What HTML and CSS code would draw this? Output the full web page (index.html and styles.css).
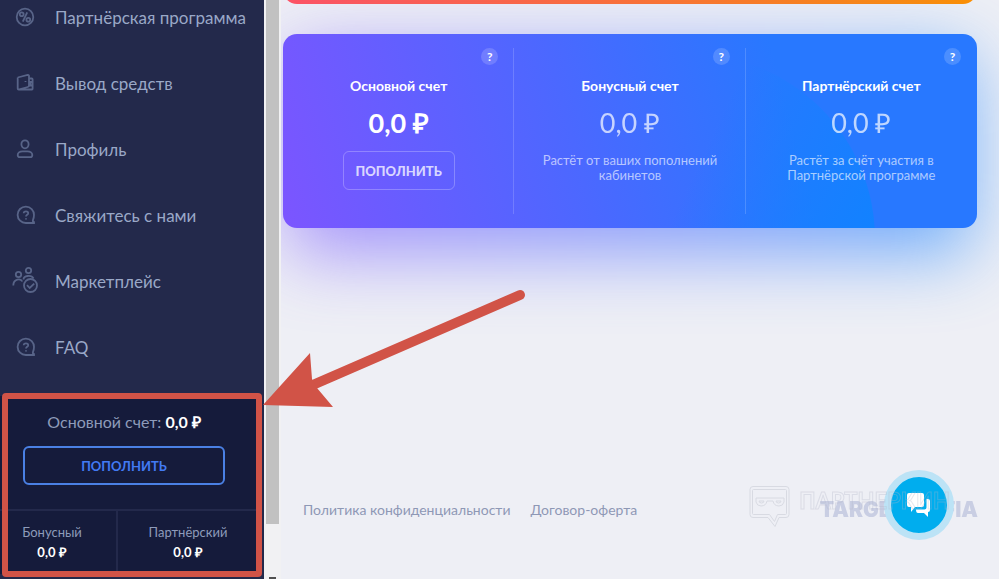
FILE: index.html
```
<!DOCTYPE html>
<html lang="ru">
<head>
  <meta charset="UTF-8">
  <meta name="viewport" content="width=device-width, initial-scale=1.0">
  <title>Баланс</title>
  <link rel="stylesheet" href="styles.css">
</head>
<body>
  <div class="layout">
    <aside class="sidebar">
      <nav class="menu">
        <a href="#" class="menu-item">
          <svg class="icon" viewBox="0 0 26 26"><circle cx="13" cy="13" r="8.3"/><circle cx="9.700" cy="10.3" r="1.9"/><circle cx="16.300" cy="15.7" r="1.9"/><path d="M15.2 8.300l-4.400 9.400"/></svg>
          Партнёрская программа
        </a>
        <a href="#" class="menu-item">
          <svg class="icon" viewBox="0 0 26 26"><path d="M5.7 7.5l10-2.5q1.3-.2 1.3 1v9.5q0 1.2-1.2 1.5L6.5 19.5M5.7 7.5v11q0 1 1 1h13.3q.6 0 .6-.8V9.500q0-1-.9-1h-2.500M20 12h-1.500v3.500h1.500M13.500 11v1"/></svg>
          Вывод средств
        </a>
        <a href="#" class="menu-item">
          <svg class="icon" viewBox="0 0 26 26"><ellipse cx="13" cy="8.3" rx="3.6" ry="4"/><path d="M10.500 15.300h5c3 0 4.800 1.800 4.800 3.700 0 1.400-.8 2.200-2 2.200H7.700c-1.200 0-2-.8-2-2.200 0-1.900 1.800-3.700 4.800-3.700z"/></svg>
          Профиль
        </a>
        <a href="#" class="menu-item">
          <svg class="icon" viewBox="0 0 26 26"><path d="M22 21h-8a8.200 8.200 0 1 1 8-8q0 2.500-1 4.800c-.4 1.200 0 2 1 2.400z"/><path d="M11.700 11.200c0-2.600 4.500-2.500 4.500 0 0 1.700-2.200 1.600-2.200 3.400M14 16.200v1.400"/></svg>
          Свяжитесь с нами
        </a>
        <a href="#" class="menu-item">
          <svg class="icon" viewBox="0 0 26 26"><circle cx="16.500" cy="2.500" r="2.700"/><circle cx="6.500" cy="6.500" r="2.700"/><path d="M1.300 17.500c0-7 7.500-7.500 9-4M11.500 11.500c0-4 8-5 10-1"/><circle cx="18.500" cy="17.500" r="6.500"/><path d="M15 17.200l2.700 2.800 4.500-4.300"/></svg>
          Маркетплейс
        </a>
        <a href="#" class="menu-item">
          <svg class="icon" viewBox="0 0 26 26"><path d="M22 21h-8a8.200 8.200 0 1 1 8-8q0 2.500-1 4.800c-.4 1.200 0 2 1 2.400z"/><path d="M11.700 11.200c0-2.600 4.500-2.500 4.500 0 0 1.700-2.200 1.600-2.200 3.400M14 16.200v1.400"/></svg>
          FAQ
        </a>
      </nav>
      <section class="balance">
        <div class="balance-main">
          <p class="balance-title">Основной счет: <b>0,0 ₽</b></p>
          <button type="button" class="balance-btn">ПОПОЛНИТЬ</button>
        </div>
        <div class="balance-row">
          <div class="balance-cell">Бонусный<b>0,0 ₽</b></div>
          <div class="balance-cell">Партнёрский<b>0,0 ₽</b></div>
        </div>
      </section>
    </aside>
    <div class="scrollbar">
      <div class="thumb"></div>
      <div class="scroll-arrow"></div>
    </div>
    <main class="content">
      <div class="banner"></div>
      <section class="accounts">
        <div class="accounts-bg"></div>
        <div class="account">
          <button type="button" class="help">?</button>
          <h3>Основной счет</h3>
          <p class="sum sum-main">0,0 ₽</p>
          <button type="button" class="account-btn">ПОПОЛНИТЬ</button>
        </div>
        <div class="account">
          <button type="button" class="help">?</button>
          <h3>Бонусный счет</h3>
          <p class="sum">0,0 ₽</p>
          <p class="note">Растёт от ваших пополнений<br>кабинетов</p>
        </div>
        <div class="account">
          <button type="button" class="help">?</button>
          <h3>Партнёрский счет</h3>
          <p class="sum">0,0 ₽</p>
          <p class="note">Растёт за счёт участия в<br>Партнёрской программе</p>
        </div>
      </section>
      <footer class="footer">
        <a href="#">Политика конфиденциальности</a>
        <a href="#">Договор-оферта</a>
      </footer>
    </main>
  </div>

  <div class="brand">TARGETMAFIA</div>
  <button type="button" class="chat" aria-label="Чат">
    <svg viewBox="0 0 26 26"><path d="M3 1h13q2 0 2 2v10q0 2-2 2h-7l-4 5v-5H3q-2 0-2-2V3q0-2 2-2z"/><path d="M20.500 7h1.500q2 0 2 2v9q0 2-2 2v5l-4-4h-6q-2 0-2-3.500h8.500q2 0 2-2z"/></svg>
  </button>
  <div class="watermark">
    <svg viewBox="0 0 42 44"><path d="M4 1.500h33q3 0 3 3v25q0 3-3 3h-7l-4 9-7-9H4q-3 0-3-3v-25q0-3 3-3z"/><path d="M4.500 4.500h32q1 0 1 1v23q0 1-1 1h-8l-3 7-5-7h-16q-1 0-1-1v-23q0-1 1-1z"/><path d="M7 13h28v4q-1 4-5 4-5 0-6-5h-6q-1 5-6 5-4 0-5-4zM10 16h5q0 2-2.500 2T10 16zM27 16h5q0 2-2.500 2T27 16z"/></svg>
    <span>ПАРТНЕРКИН</span>
  </div>

  <div class="frame"></div>
  <svg class="arrow" viewBox="0 0 264 122"><path d="M257 9L52 98"/><polygon points="0,119 47,67 49,93 54,102 70,121"/></svg>
</body>
</html>
```
FILE: styles.css
```
* {
  box-sizing: border-box;
}
body {
  margin: 0;
  font-family: Lato, "Open Sans", sans-serif;
  background: #eeeff5;
  overflow: hidden;
}
h3, p {
  margin: 0;
}
a {
  text-decoration: none;
}
button {
  font-family: inherit;
  cursor: pointer;
}
.layout {
  display: flex;
  height: 100vh;
}

/* sidebar */
.sidebar {
  width: 264px;
  flex-shrink: 0;
  display: flex;
  flex-direction: column;
  justify-content: flex-end;
  padding-bottom: 5px;
  background: #23294b;
  overflow: hidden;
}
.menu-item {
  display: flex;
  align-items: center;
  gap: 17px;
  height: 66px;
  padding-left: 12px;
  font-size: 17px;
  color: #9aa8c7;
}
.icon {
  width: 26px;
  height: 26px;
  overflow: visible;
  fill: none;
  stroke: #586488;
  stroke-width: 1.8;
}
.balance {
  width: 258px;
  margin-top: 16px;
  background: #151b3b;
  border-bottom-right-radius: 6px;
  color: #8e9bba;
}
.balance-main {
  width: 248px;
  padding: 16px 23px 24px;
  text-align: center;
}
.balance-title {
  font-size: 16px;
  line-height: 20px;
}
.balance b {
  color: #fff;
}
.balance-btn {
  width: 100%;
  height: 39px;
  margin-top: 14px;
  background: none;
  border: 2px solid #4a80e4;
  border-radius: 6px;
  color: #427af4;
  font-size: 13px;
  font-weight: bold;
}
.balance-row {
  display: grid;
  grid-template-columns: 116px 1fr;
  border-top: 2px solid #23294b;
}
.balance-cell {
  padding: 11px 12px 12px 0;
  font-size: 13px;
  line-height: 20px;
  text-align: center;
}
.balance-cell + .balance-cell {
  padding-right: 0;
  border-left: 2px solid #23294b;
}
.balance-cell b {
  display: block;
}

/* scrollbar */
.scrollbar {
  width: 17px;
  flex-shrink: 0;
  display: flex;
  flex-direction: column;
  justify-content: space-between;
  align-items: center;
  background: #f1f1f3;
}
.thumb {
  width: 13px;
  height: 90.5%;
  background: #c1c1c1;
}
.scroll-arrow {
  width: 7px;
  height: 2px;
  background: #505050;
}

/* content */
.content {
  flex: 1;
  display: flex;
  flex-direction: column;
  padding: 0 22px 0 2px;
  overflow: hidden;
}
.banner {
  flex-shrink: 0;
  height: 40px;
  margin: -36px 0 30px;
  border-radius: 14px;
  background: linear-gradient(90deg, #ff5263, #ff9000);
}
.accounts {
  position: relative;
  z-index: 0;
  display: grid;
  grid-template-columns: repeat(3, 1fr);
  height: 194px;
  flex-shrink: 0;
}
.accounts::before {
  content: "";
  position: absolute;
  inset: 20px 6px -26px;
  z-index: -2;
  filter: blur(36px);
  opacity: 0.6;
  background: linear-gradient(90deg, #7c55ff, #4b68ff 50%, #1585ff);
}
.accounts-bg {
  position: absolute;
  inset: 0;
  z-index: -1;
  border-radius: 14px;
  overflow: hidden;
  background: linear-gradient(75deg, #7c55ff, #4b68ff 42%, #2878ff 72%, #2878ff);
}
.accounts-bg::after {
  content: "";
  position: absolute;
  top: 20px;
  right: 102px;
  width: 370px;
  height: 370px;
  border-radius: 50%;
  background: linear-gradient(115deg, #0d84ff00 45%, #0d84ffdd 85%);
}
.account {
  position: relative;
  display: flex;
  flex-direction: column;
  align-items: center;
  padding-top: 43px;
  color: #fff;
  text-align: center;
}
.account + .account::before {
  content: "";
  position: absolute;
  top: 14px;
  bottom: 14px;
  left: -1px;
  width: 1px;
  background: #ffffff2a;
}
.help {
  position: absolute;
  top: 14px;
  right: 16px;
  width: 17px;
  height: 17px;
  padding: 0;
  border: none;
  border-radius: 50%;
  background: #ffffff2a;
  color: #fff;
  font-size: 12px;
  font-weight: bold;
  line-height: 17px;
}
.account h3 {
  font-size: 14px;
  line-height: 18px;
}
.sum {
  margin-top: 10px;
  font-size: 27px;
  line-height: 36px;
  opacity: 0.7;
}
.sum-main {
  font-weight: bold;
  opacity: 1;
}
.note {
  margin-top: 12px;
  font-size: 13px;
  line-height: 15px;
  color: #ffffffa0;
}
.account-btn {
  width: 112px;
  height: 39px;
  margin-top: 10px;
  padding: 0;
  background: none;
  border: 1px solid #ffffff40;
  border-radius: 6px;
  color: #ffffffc0;
  font-size: 13px;
  font-weight: 900;
}
.footer {
  display: flex;
  gap: 20px;
  margin-top: auto;
  padding: 0 20px 60px;
  font-size: 14px;
  line-height: 18px;
}
.footer a {
  color: #8e98b5;
}

/* overlays */
.chat {
  position: fixed;
  right: 45px;
  bottom: 39px;
  width: 70px;
  height: 70px;
  padding: 0;
  border: 7px solid #bce3f6;
  border-radius: 50%;
  background: #00adee;
}
.chat svg {
  display: block;
  width: 26px;
  height: 26px;
  margin: 0 auto;
  fill: #fff;
}
.brand {
  position: fixed;
  right: 21px;
  bottom: 57px;
  font-family: Inter, sans-serif;
  font-size: 21px;
  line-height: 24px;
  font-weight: 900;
  color: #c9cee3;
}
.watermark {
  position: fixed;
  right: 49px;
  bottom: 50px;
  display: flex;
  gap: 8px;
  font-size: 22px;
  line-height: 32px;
  font-weight: bold;
  color: transparent;
  -webkit-text-stroke: 1px #b4b8c855;
  pointer-events: none;
}
.watermark svg {
  width: 42px;
  height: 44px;
  fill: none;
  stroke: #d8dae2;
}
.frame {
  position: fixed;
  left: 2px;
  bottom: 2px;
  width: 260px;
  height: 184px;
  border: 6px solid #d15347;
  border-radius: 4px;
  pointer-events: none;
}
.arrow {
  position: fixed;
  left: 263px;
  top: 286px;
  width: 264px;
  height: 122px;
  fill: #d15347;
  pointer-events: none;
}
.arrow path {
  stroke: #d15347;
  stroke-width: 10;
  stroke-linecap: round;
}
```
